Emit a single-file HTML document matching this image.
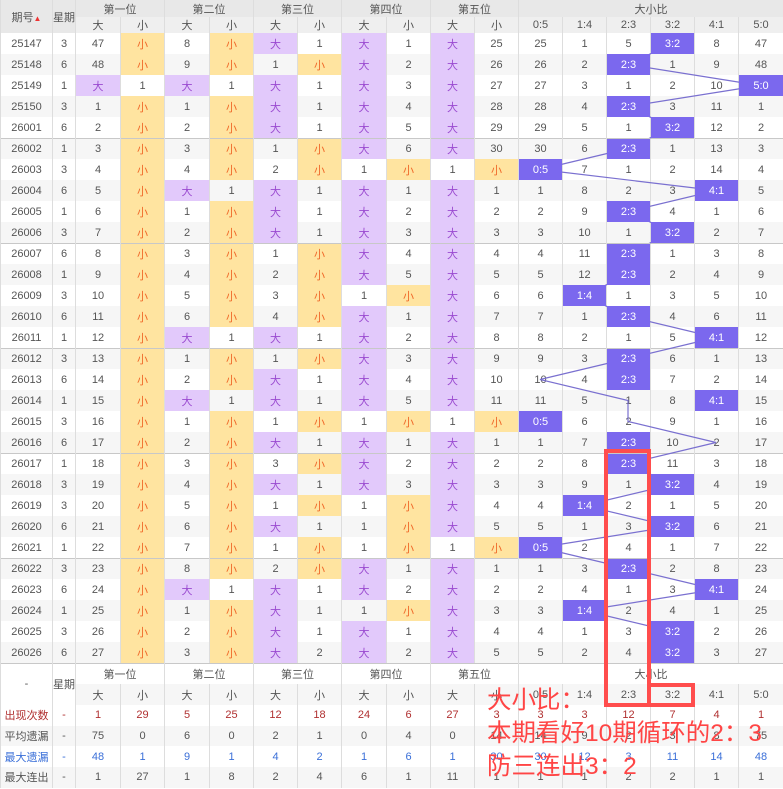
<!DOCTYPE html><html><head><meta charset="utf-8"><style>
body{margin:0;width:783px;height:789px;overflow:hidden;background:#fff;font-family:"Liberation Sans","Noto Sans CJK SC",sans-serif;position:relative}
table{border-collapse:collapse;table-layout:fixed;width:783px;font-size:11px;color:#555;position:absolute;left:0;top:0}
td{text-align:center;padding:0;border-left:1px solid #ddd;border-right:1px solid #ddd;white-space:nowrap;overflow:hidden}
thead td,.fh td{background:#e8e8e8;font-size:11px;color:#555}
.r1 td{height:17px}.r2 td{height:16px;background:#efefef}
tbody tr td{height:21px}
tbody tr:nth-child(even) td{background:#f6f6f6}
tbody tr:nth-child(odd) td{background:#fff}
tbody tr.g td{box-shadow:inset 0 1px #c8c8c8}
tbody td.p{background:#e2c9fb!important;color:#9a4ad0}
tbody td.y{background:#ffe4a0!important;color:#f06a2a}
tbody td.h{background:#7b68ee!important;color:#fff;position:relative;z-index:2}
.fh td{height:21px}.fh2 td{background:#efefef;height:21px}
.st td{height:20.7px}
.st:nth-child(even) td{background:#f6f6f6}
.a td{color:#b03030}.b td{color:#555}.c td{color:#3a6fd8}.d td{color:#555}
.gl{border-left:1px solid #c4c4c4!important}
svg{position:absolute;left:0;top:0;z-index:1}
.ann{position:absolute;left:487px;top:684px;color:#ff4545;font-size:24.5px;line-height:33px;z-index:5;white-space:nowrap}
</style></head><body>
<table>
<colgroup><col style="width:52px"><col style="width:23px"><col style="width:45px"><col style="width:44px"><col style="width:45px"><col style="width:44px"><col style="width:44px"><col style="width:44px"><col style="width:45px"><col style="width:44px"><col style="width:44px"><col style="width:44px"><col style="width:44px"><col style="width:44px"><col style="width:44px"><col style="width:44px"><col style="width:44px"><col style="width:45px"></colgroup>
<thead>
<tr class="r1"><td rowspan="2" style="background:#e8e8e8">期号<span style="font-size:8px;color:#e33">▲</span></td><td rowspan="2" style="background:#e8e8e8">星期</td><td colspan="2">第一位</td><td colspan="2">第二位</td><td colspan="2">第三位</td><td colspan="2">第四位</td><td colspan="2">第五位</td><td colspan="6">大小比</td></tr>
<tr class="r2"><td>大</td><td>小</td><td>大</td><td>小</td><td>大</td><td>小</td><td>大</td><td>小</td><td>大</td><td>小</td><td>0:5</td><td>1:4</td><td>2:3</td><td>3:2</td><td>4:1</td><td>5:0</td></tr>
</thead>
<tbody>
<tr><td>25147</td><td>3</td><td>47</td><td class=y>小</td><td>8</td><td class=y>小</td><td class=p>大</td><td>1</td><td class=p>大</td><td>1</td><td class=p>大</td><td>25</td><td>25</td><td>1</td><td>5</td><td class=h>3:2</td><td>8</td><td>47</td></tr>
<tr><td>25148</td><td>6</td><td>48</td><td class=y>小</td><td>9</td><td class=y>小</td><td>1</td><td class=y>小</td><td class=p>大</td><td>2</td><td class=p>大</td><td>26</td><td>26</td><td>2</td><td class=h>2:3</td><td>1</td><td>9</td><td>48</td></tr>
<tr><td>25149</td><td>1</td><td class=p>大</td><td>1</td><td class=p>大</td><td>1</td><td class=p>大</td><td>1</td><td class=p>大</td><td>3</td><td class=p>大</td><td>27</td><td>27</td><td>3</td><td>1</td><td>2</td><td>10</td><td class=h>5:0</td></tr>
<tr><td>25150</td><td>3</td><td>1</td><td class=y>小</td><td>1</td><td class=y>小</td><td class=p>大</td><td>1</td><td class=p>大</td><td>4</td><td class=p>大</td><td>28</td><td>28</td><td>4</td><td class=h>2:3</td><td>3</td><td>11</td><td>1</td></tr>
<tr><td>26001</td><td>6</td><td>2</td><td class=y>小</td><td>2</td><td class=y>小</td><td class=p>大</td><td>1</td><td class=p>大</td><td>5</td><td class=p>大</td><td>29</td><td>29</td><td>5</td><td>1</td><td class=h>3:2</td><td>12</td><td>2</td></tr>
<tr class=g><td>26002</td><td>1</td><td>3</td><td class=y>小</td><td>3</td><td class=y>小</td><td>1</td><td class=y>小</td><td class=p>大</td><td>6</td><td class=p>大</td><td>30</td><td>30</td><td>6</td><td class=h>2:3</td><td>1</td><td>13</td><td>3</td></tr>
<tr><td>26003</td><td>3</td><td>4</td><td class=y>小</td><td>4</td><td class=y>小</td><td>2</td><td class=y>小</td><td>1</td><td class=y>小</td><td>1</td><td class=y>小</td><td class=h>0:5</td><td>7</td><td>1</td><td>2</td><td>14</td><td>4</td></tr>
<tr><td>26004</td><td>6</td><td>5</td><td class=y>小</td><td class=p>大</td><td>1</td><td class=p>大</td><td>1</td><td class=p>大</td><td>1</td><td class=p>大</td><td>1</td><td>1</td><td>8</td><td>2</td><td>3</td><td class=h>4:1</td><td>5</td></tr>
<tr><td>26005</td><td>1</td><td>6</td><td class=y>小</td><td>1</td><td class=y>小</td><td class=p>大</td><td>1</td><td class=p>大</td><td>2</td><td class=p>大</td><td>2</td><td>2</td><td>9</td><td class=h>2:3</td><td>4</td><td>1</td><td>6</td></tr>
<tr><td>26006</td><td>3</td><td>7</td><td class=y>小</td><td>2</td><td class=y>小</td><td class=p>大</td><td>1</td><td class=p>大</td><td>3</td><td class=p>大</td><td>3</td><td>3</td><td>10</td><td>1</td><td class=h>3:2</td><td>2</td><td>7</td></tr>
<tr class=g><td>26007</td><td>6</td><td>8</td><td class=y>小</td><td>3</td><td class=y>小</td><td>1</td><td class=y>小</td><td class=p>大</td><td>4</td><td class=p>大</td><td>4</td><td>4</td><td>11</td><td class=h>2:3</td><td>1</td><td>3</td><td>8</td></tr>
<tr><td>26008</td><td>1</td><td>9</td><td class=y>小</td><td>4</td><td class=y>小</td><td>2</td><td class=y>小</td><td class=p>大</td><td>5</td><td class=p>大</td><td>5</td><td>5</td><td>12</td><td class=h>2:3</td><td>2</td><td>4</td><td>9</td></tr>
<tr><td>26009</td><td>3</td><td>10</td><td class=y>小</td><td>5</td><td class=y>小</td><td>3</td><td class=y>小</td><td>1</td><td class=y>小</td><td class=p>大</td><td>6</td><td>6</td><td class=h>1:4</td><td>1</td><td>3</td><td>5</td><td>10</td></tr>
<tr><td>26010</td><td>6</td><td>11</td><td class=y>小</td><td>6</td><td class=y>小</td><td>4</td><td class=y>小</td><td class=p>大</td><td>1</td><td class=p>大</td><td>7</td><td>7</td><td>1</td><td class=h>2:3</td><td>4</td><td>6</td><td>11</td></tr>
<tr><td>26011</td><td>1</td><td>12</td><td class=y>小</td><td class=p>大</td><td>1</td><td class=p>大</td><td>1</td><td class=p>大</td><td>2</td><td class=p>大</td><td>8</td><td>8</td><td>2</td><td>1</td><td>5</td><td class=h>4:1</td><td>12</td></tr>
<tr class=g><td>26012</td><td>3</td><td>13</td><td class=y>小</td><td>1</td><td class=y>小</td><td>1</td><td class=y>小</td><td class=p>大</td><td>3</td><td class=p>大</td><td>9</td><td>9</td><td>3</td><td class=h>2:3</td><td>6</td><td>1</td><td>13</td></tr>
<tr><td>26013</td><td>6</td><td>14</td><td class=y>小</td><td>2</td><td class=y>小</td><td class=p>大</td><td>1</td><td class=p>大</td><td>4</td><td class=p>大</td><td>10</td><td>10</td><td>4</td><td class=h>2:3</td><td>7</td><td>2</td><td>14</td></tr>
<tr><td>26014</td><td>1</td><td>15</td><td class=y>小</td><td class=p>大</td><td>1</td><td class=p>大</td><td>1</td><td class=p>大</td><td>5</td><td class=p>大</td><td>11</td><td>11</td><td>5</td><td>1</td><td>8</td><td class=h>4:1</td><td>15</td></tr>
<tr><td>26015</td><td>3</td><td>16</td><td class=y>小</td><td>1</td><td class=y>小</td><td>1</td><td class=y>小</td><td>1</td><td class=y>小</td><td>1</td><td class=y>小</td><td class=h>0:5</td><td>6</td><td>2</td><td>9</td><td>1</td><td>16</td></tr>
<tr><td>26016</td><td>6</td><td>17</td><td class=y>小</td><td>2</td><td class=y>小</td><td class=p>大</td><td>1</td><td class=p>大</td><td>1</td><td class=p>大</td><td>1</td><td>1</td><td>7</td><td class=h>2:3</td><td>10</td><td>2</td><td>17</td></tr>
<tr class=g><td>26017</td><td>1</td><td>18</td><td class=y>小</td><td>3</td><td class=y>小</td><td>3</td><td class=y>小</td><td class=p>大</td><td>2</td><td class=p>大</td><td>2</td><td>2</td><td>8</td><td class=h>2:3</td><td>11</td><td>3</td><td>18</td></tr>
<tr><td>26018</td><td>3</td><td>19</td><td class=y>小</td><td>4</td><td class=y>小</td><td class=p>大</td><td>1</td><td class=p>大</td><td>3</td><td class=p>大</td><td>3</td><td>3</td><td>9</td><td>1</td><td class=h>3:2</td><td>4</td><td>19</td></tr>
<tr><td>26019</td><td>3</td><td>20</td><td class=y>小</td><td>5</td><td class=y>小</td><td>1</td><td class=y>小</td><td>1</td><td class=y>小</td><td class=p>大</td><td>4</td><td>4</td><td class=h>1:4</td><td>2</td><td>1</td><td>5</td><td>20</td></tr>
<tr><td>26020</td><td>6</td><td>21</td><td class=y>小</td><td>6</td><td class=y>小</td><td class=p>大</td><td>1</td><td>1</td><td class=y>小</td><td class=p>大</td><td>5</td><td>5</td><td>1</td><td>3</td><td class=h>3:2</td><td>6</td><td>21</td></tr>
<tr><td>26021</td><td>1</td><td>22</td><td class=y>小</td><td>7</td><td class=y>小</td><td>1</td><td class=y>小</td><td>1</td><td class=y>小</td><td>1</td><td class=y>小</td><td class=h>0:5</td><td>2</td><td>4</td><td>1</td><td>7</td><td>22</td></tr>
<tr class=g><td>26022</td><td>3</td><td>23</td><td class=y>小</td><td>8</td><td class=y>小</td><td>2</td><td class=y>小</td><td class=p>大</td><td>1</td><td class=p>大</td><td>1</td><td>1</td><td>3</td><td class=h>2:3</td><td>2</td><td>8</td><td>23</td></tr>
<tr><td>26023</td><td>6</td><td>24</td><td class=y>小</td><td class=p>大</td><td>1</td><td class=p>大</td><td>1</td><td class=p>大</td><td>2</td><td class=p>大</td><td>2</td><td>2</td><td>4</td><td>1</td><td>3</td><td class=h>4:1</td><td>24</td></tr>
<tr><td>26024</td><td>1</td><td>25</td><td class=y>小</td><td>1</td><td class=y>小</td><td class=p>大</td><td>1</td><td>1</td><td class=y>小</td><td class=p>大</td><td>3</td><td>3</td><td class=h>1:4</td><td>2</td><td>4</td><td>1</td><td>25</td></tr>
<tr><td>26025</td><td>3</td><td>26</td><td class=y>小</td><td>2</td><td class=y>小</td><td class=p>大</td><td>1</td><td class=p>大</td><td>1</td><td class=p>大</td><td>4</td><td>4</td><td>1</td><td>3</td><td class=h>3:2</td><td>2</td><td>26</td></tr>
<tr><td>26026</td><td>6</td><td>27</td><td class=y>小</td><td>3</td><td class=y>小</td><td class=p>大</td><td>2</td><td class=p>大</td><td>2</td><td class=p>大</td><td>5</td><td>5</td><td>2</td><td>4</td><td class=h>3:2</td><td>3</td><td>27</td></tr>
</tbody>
<tbody>
<tr class="fh"><td rowspan="2" style="box-shadow:inset 0 1px #c8c8c8">-</td><td rowspan="2" style="box-shadow:inset 0 1px #c8c8c8">星期</td><td colspan="2" style="box-shadow:inset 0 1px #c8c8c8">第一位</td><td colspan="2" style="box-shadow:inset 0 1px #c8c8c8">第二位</td><td colspan="2" style="box-shadow:inset 0 1px #c8c8c8">第三位</td><td colspan="2" style="box-shadow:inset 0 1px #c8c8c8">第四位</td><td colspan="2" style="box-shadow:inset 0 1px #c8c8c8">第五位</td><td colspan="6" style="box-shadow:inset 0 1px #c8c8c8">大小比</td></tr>
<tr class="fh2"><td>大</td><td>小</td><td>大</td><td>小</td><td>大</td><td>小</td><td>大</td><td>小</td><td>大</td><td>小</td><td>0:5</td><td>1:4</td><td>2:3</td><td>3:2</td><td>4:1</td><td>5:0</td></tr>
<tr class="st a"><td>出现次数</td><td>-</td><td>1</td><td>29</td><td>5</td><td>25</td><td>12</td><td>18</td><td>24</td><td>6</td><td>27</td><td>3</td><td>3</td><td>3</td><td>12</td><td>7</td><td>4</td><td>1</td></tr>
<tr class="st b" style="background:#f6f6f6"><td style="background:#f6f6f6">平均遗漏</td><td style="background:#f6f6f6">-</td><td style="background:#f6f6f6">75</td><td style="background:#f6f6f6">0</td><td style="background:#f6f6f6">6</td><td style="background:#f6f6f6">0</td><td style="background:#f6f6f6">2</td><td style="background:#f6f6f6">1</td><td style="background:#f6f6f6">0</td><td style="background:#f6f6f6">4</td><td style="background:#f6f6f6">0</td><td style="background:#f6f6f6">14</td><td style="background:#f6f6f6">14</td><td style="background:#f6f6f6">9</td><td style="background:#f6f6f6">2</td><td style="background:#f6f6f6">3</td><td style="background:#f6f6f6">8</td><td style="background:#f6f6f6">75</td></tr>
<tr class="st c"><td>最大遗漏</td><td>-</td><td>48</td><td>1</td><td>9</td><td>1</td><td>4</td><td>2</td><td>1</td><td>6</td><td>1</td><td>30</td><td>30</td><td>12</td><td>3</td><td>11</td><td>14</td><td>48</td></tr>
<tr class="st d"><td style="background:#f6f6f6">最大连出</td><td style="background:#f6f6f6">-</td><td style="background:#f6f6f6">1</td><td style="background:#f6f6f6">27</td><td style="background:#f6f6f6">1</td><td style="background:#f6f6f6">8</td><td style="background:#f6f6f6">2</td><td style="background:#f6f6f6">4</td><td style="background:#f6f6f6">6</td><td style="background:#f6f6f6">1</td><td style="background:#f6f6f6">11</td><td style="background:#f6f6f6">1</td><td style="background:#f6f6f6">1</td><td style="background:#f6f6f6">1</td><td style="background:#f6f6f6">2</td><td style="background:#f6f6f6">2</td><td style="background:#f6f6f6">1</td><td style="background:#f6f6f6">1</td></tr>
</tbody>
</table>
<svg width="783" height="789" viewBox="0 0 783 789">
<polyline fill="none" stroke="#7a70d0" stroke-width="1.2" points="672,43.5 628,64.5 760,85.5 628,106.5 672,127.5 628,148.5 540,169.5 716,190.5 628,211.5 672,232.5 628,253.5 628,274.5 584,295.5 628,316.5 716,337.5 628,358.5 540,379.5 628,400.5 628,421.5 716,442.5 628,463.5 672,484.5 584,505.5 672,526.5 540,547.5 628,568.5 716,589.5 584,610.5 672,631.5 672,652.5"/>
</svg>
<svg width="783" height="789" viewBox="0 0 783 789" style="z-index:4">
<rect x="606" y="451" width="43" height="254" fill="none" stroke="#ff4d4d" stroke-width="4"/>
<rect x="649" y="685" width="44" height="20" fill="none" stroke="#ff4d4d" stroke-width="4"/>
</svg>
<div class="ann">大小比：<br>本期看好10期循环的2：3<br>防三连出3：2</div>
</body></html>
